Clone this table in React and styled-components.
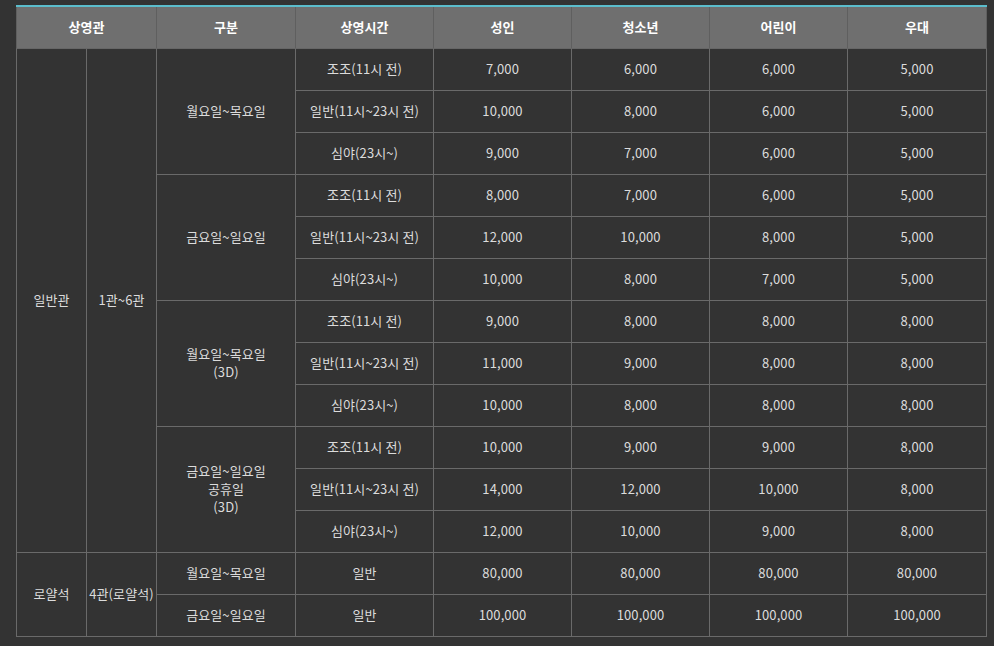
import React from 'react';
import styled, { createGlobalStyle } from 'styled-components';

const GlobalStyle = createGlobalStyle`
  html, body {
    margin: 0;
    background: #333333;
  }
`;

const Page = styled.div`
  padding: 5px 9px 0 16px;
  font-family: "Malgun Gothic", "Noto Sans CJK KR", "Noto Sans", sans-serif;
`;

const Table = styled.table`
  width: 970px;
  border-collapse: collapse;
  table-layout: fixed;
  border-top: 2px solid #5bbdcc;
  font-size: 13px;
`;

const HeadCell = styled.th`
  height: 39px;
  padding: 0 0 2px;
  background: #6f6f6f;
  color: #ffffff;
  font-weight: bold;
  text-align: center;
  border-left: 1px solid #5f5f5f;
  border-right: 1px solid #5f5f5f;
  border-bottom: 1px solid #666666;
`;

const Row = styled.tr`
  height: 42px;
`;

const Cell = styled.td`
  padding: 0 0 2px;
  color: #dcdcdc;
  text-align: center;
  vertical-align: middle;
  line-height: 18px;
  letter-spacing: 0.1px;
  border: 1px solid #6a6a6a;
`;

const widths = [70, 70, 139, 138, 138, 138, 138, 139];

const times = ['조조(11시 전)', '일반(11시~23시 전)', '심야(23시~)'];

const groups = [
  {
    label: ['월요일~목요일'],
    prices: [
      ['7,000', '6,000', '6,000', '5,000'],
      ['10,000', '8,000', '6,000', '5,000'],
      ['9,000', '7,000', '6,000', '5,000'],
    ],
  },
  {
    label: ['금요일~일요일'],
    prices: [
      ['8,000', '7,000', '6,000', '5,000'],
      ['12,000', '10,000', '8,000', '5,000'],
      ['10,000', '8,000', '7,000', '5,000'],
    ],
  },
  {
    label: ['월요일~목요일', '(3D)'],
    prices: [
      ['9,000', '8,000', '8,000', '8,000'],
      ['11,000', '9,000', '8,000', '8,000'],
      ['10,000', '8,000', '8,000', '8,000'],
    ],
  },
  {
    label: ['금요일~일요일', '공휴일', '(3D)'],
    prices: [
      ['10,000', '9,000', '9,000', '8,000'],
      ['14,000', '12,000', '10,000', '8,000'],
      ['12,000', '10,000', '9,000', '8,000'],
    ],
  },
];

const royal = [
  { label: '월요일~목요일', prices: ['80,000', '80,000', '80,000', '80,000'] },
  { label: '금요일~일요일', prices: ['100,000', '100,000', '100,000', '100,000'] },
];

const Lines = ({ lines }) =>
  lines.map((l, i) => (
    <React.Fragment key={i}>
      {i > 0 && <br />}
      {l}
    </React.Fragment>
  ));

export default function App() {
  return (
    <Page>
      <GlobalStyle />
      <Table>
        <colgroup>
          {widths.map((w, i) => (
            <col key={i} style={{ width: w }} />
          ))}
        </colgroup>
        <thead>
          <tr>
            <HeadCell colSpan={2}>상영관</HeadCell>
            <HeadCell>구분</HeadCell>
            <HeadCell>상영시간</HeadCell>
            <HeadCell>성인</HeadCell>
            <HeadCell>청소년</HeadCell>
            <HeadCell>어린이</HeadCell>
            <HeadCell>우대</HeadCell>
          </tr>
        </thead>
        <tbody>
          {groups.map((g, gi) =>
            g.prices.map((p, pi) => (
              <Row key={`${gi}-${pi}`}>
                {gi === 0 && pi === 0 && (
                  <>
                    <Cell rowSpan={12}>일반관</Cell>
                    <Cell rowSpan={12}>1관~6관</Cell>
                  </>
                )}
                {pi === 0 && (
                  <Cell rowSpan={3}>
                    <Lines lines={g.label} />
                  </Cell>
                )}
                <Cell>{times[pi]}</Cell>
                {p.map((v, vi) => (
                  <Cell key={vi}>{v}</Cell>
                ))}
              </Row>
            ))
          )}
          {royal.map((r, ri) => (
            <Row key={`r-${ri}`}>
              {ri === 0 && (
                <>
                  <Cell rowSpan={2}>로얄석</Cell>
                  <Cell rowSpan={2}>4관(로얄석)</Cell>
                </>
              )}
              <Cell>{r.label}</Cell>
              <Cell>일반</Cell>
              {r.prices.map((v, vi) => (
                <Cell key={vi}>{v}</Cell>
              ))}
            </Row>
          ))}
        </tbody>
      </Table>
    </Page>
  );
}
